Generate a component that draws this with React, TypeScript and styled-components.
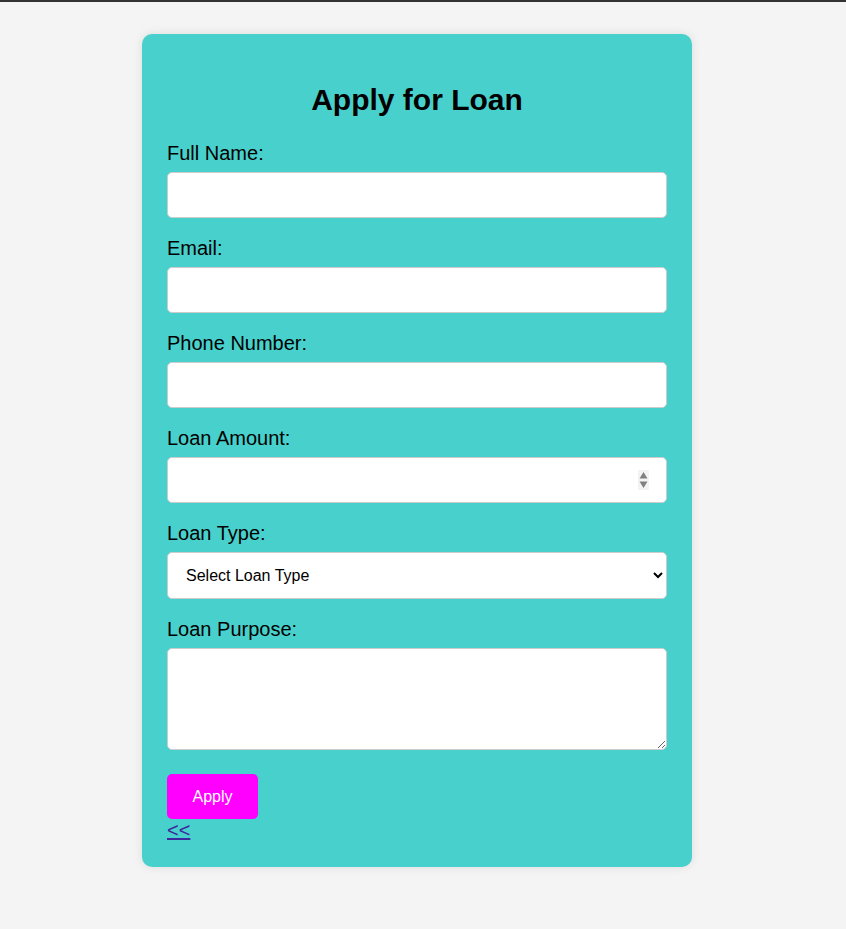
import React from "react";
import styled, { createGlobalStyle } from "styled-components";

const GlobalStyle = createGlobalStyle`
  * { box-sizing: border-box; }
  html, body { margin: 0; padding: 0; }
  body {
    background: #f4f4f4;
    font-family: "Liberation Sans", Arial, sans-serif;
    border-top: 2px solid #333333;
    min-height: 929px;
  }
`;

const Page = styled.div`
  padding: 32px 0 40px 142px;
`;

const Card = styled.form`
  width: 550px;
  background: #48d1cc;
  border-radius: 10px;
  padding: 25px;
  box-shadow: 0 0 10px rgba(0, 0, 0, 0.1);
  display: flex;
  flex-direction: column;
  align-items: flex-start;
`;

const Title = styled.h2`
  align-self: stretch;
  text-align: center;
  font-size: 30px;
  font-weight: bold;
  color: #000;
  margin: 24px 0 25px;
  line-height: normal;
`;

const Label = styled.label`
  display: block;
  font-size: 20px;
  color: #000;
  margin-bottom: 7px;
  line-height: 23px;
`;

const fieldBase = `
  display: block;
  width: 500px;
  border: 1px solid #cccccc;
  border-radius: 5px;
  background: #ffffff;
  font-family: "Liberation Sans", Arial, sans-serif;
  font-size: 16px;
  color: #000;
  outline: none;
`;

const Input = styled.input`
  ${fieldBase}
  height: 46px;
  padding: 12px;
  margin-bottom: 19px;
`;

const NumberWrap = styled.div`
  position: relative;
  width: 500px;
`;

const NumberInput = styled(Input)`
  padding-right: 36px;
  -moz-appearance: textfield;
  &::-webkit-inner-spin-button,
  &::-webkit-outer-spin-button {
    -webkit-appearance: none;
    margin: 0;
  }
`;

const Spinner = styled.svg`
  position: absolute;
  right: 18px;
  top: 13px;
  width: 11px;
  height: 20px;
  pointer-events: none;
`;

const Select = styled.select`
  ${fieldBase}
  height: 47px;
  padding: 12px 14px;
  margin-bottom: 19px;
`;

const TextArea = styled.textarea`
  ${fieldBase}
  height: 102px;
  padding: 12px;
  margin-bottom: 24px;
  resize: both;
`;

const Button = styled.button`
  background: #ff00ff;
  color: #ffffff;
  border: none;
  border-radius: 5px;
  padding: 0 25px;
  height: 45px;
  width: 91px;
  font-family: "Liberation Sans", Arial, sans-serif;
  font-size: 16px;
  cursor: pointer;
`;

const BackLink = styled.a`
  font-size: 20px;
  line-height: 23px;
  color: #3b2a9e;
  text-decoration: underline;
`;

export default function App() {
  return (
    <>
      <GlobalStyle />
      <Page>
        <Card onSubmit={(e) => e.preventDefault()}>
          <Title>Apply for Loan</Title>
          <Label htmlFor="name">Full Name:</Label>
          <Input id="name" type="text" />
          <Label htmlFor="email">Email:</Label>
          <Input id="email" type="email" />
          <Label htmlFor="phone">Phone Number:</Label>
          <Input id="phone" type="tel" />
          <Label htmlFor="amount">Loan Amount:</Label>
          <NumberWrap>
            <NumberInput id="amount" type="number" />
            <Spinner viewBox="0 0 11 20" aria-hidden="true">
              <rect x="0" y="0" width="11" height="20" fill="#f3f3f3" />
              <path d="M5.5 2 L9.5 8.5 L1.5 8.5 Z" fill="#808080" />
              <path d="M5.5 18 L9.5 11.5 L1.5 11.5 Z" fill="#808080" />
            </Spinner>
          </NumberWrap>
          <Label htmlFor="type">Loan Type:</Label>
          <Select id="type" defaultValue="">
            <option value="">Select Loan Type</option>
            <option value="personal">Personal Loan</option>
            <option value="home">Home Loan</option>
            <option value="car">Car Loan</option>
          </Select>
          <Label htmlFor="purpose">Loan Purpose:</Label>
          <TextArea id="purpose" />
          <Button type="submit">Apply</Button>
          <BackLink href="#">&lt;&lt;</BackLink>
        </Card>
      </Page>
    </>
  );
}
